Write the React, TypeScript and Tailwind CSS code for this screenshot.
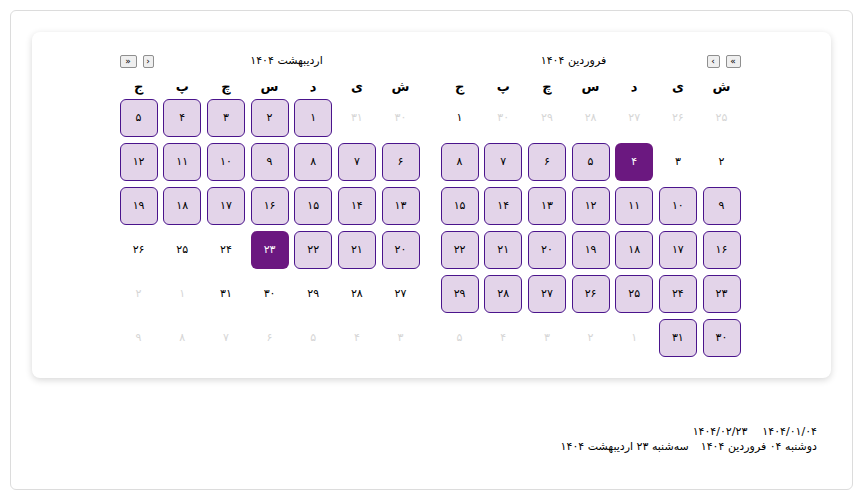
import React from "react";

const fa = (n: number) =>
  String(n).replace(/[0-9]/g, (d) => "۰۱۲۳۴۵۶۷۸۹"[Number(d)]);

type Cell = { d: number; kind: "out" | "plain" | "range" | "sel" };

function buildMonth(
  prevDays: number,
  startIdx: number,
  days: number,
  kindOf: (d: number) => Cell["kind"]
): Cell[] {
  const cells: Cell[] = [];
  for (let i = startIdx - 1; i >= 0; i--) cells.push({ d: prevDays - i, kind: "out" });
  for (let d = 1; d <= days; d++) cells.push({ d, kind: kindOf(d) });
  let n = 1;
  while (cells.length < 42) cells.push({ d: n++, kind: "out" });
  return cells;
}

const farvardin = buildMonth(30, 6, 31, (d) => (d < 4 ? "plain" : d === 4 ? "sel" : "range"));
const ordibehesht = buildMonth(31, 2, 31, (d) => (d < 23 ? "range" : d === 23 ? "sel" : "plain"));

const weekdays = ["ش", "ی", "د", "س", "چ", "پ", "ج"];

function NavBtn({ children, w }: { children: React.ReactNode; w: string }) {
  return (
    <button
      className={`${w} h-[13px] flex items-center justify-center rounded-[2px] border border-[#8f8f8f] bg-[#efefef] text-[9px] leading-none text-black`}
    >
      {children}
    </button>
  );
}

function DayCell({ c }: { c: Cell }) {
  const base =
    "w-[38px] h-[38px] flex items-center justify-center text-[11px] rounded-[6px]";
  if (c.kind === "out")
    return <div className={`${base} text-[#d6d6d6]`}>{fa(c.d)}</div>;
  if (c.kind === "plain") return <div className={`${base} text-black`}>{fa(c.d)}</div>;
  if (c.kind === "sel")
    return <div className={`${base} bg-[#6b1880] text-white`}>{fa(c.d)}</div>;
  return (
    <div className={`${base} bg-[#e3d4e9] border border-[#4a148c] text-black`}>{fa(c.d)}</div>
  );
}

function Month({
  title,
  cells,
  navFirst,
}: {
  title: string;
  cells: Cell[];
  navFirst: boolean;
}) {
  return (
    <div className="w-[300px] flex flex-col">
      <div className="h-[14px] flex items-center">
        {navFirst && (
          <div className="flex items-center gap-[6px]">
            <NavBtn w="w-[15px]">»</NavBtn>
            <NavBtn w="w-[13px]">›</NavBtn>
          </div>
        )}
        <div className="flex-1 text-center text-[11px] text-black">{title}</div>
        {!navFirst && (
          <div className="flex items-center gap-[6px]">
            <NavBtn w="w-[11px]">‹</NavBtn>
            <NavBtn w="w-[17px]">«</NavBtn>
          </div>
        )}
      </div>
      <div className="mt-[8px] mb-[1px] h-[22px] grid grid-cols-[repeat(7,38px)] gap-x-[5.67px]">
        {weekdays.map((w) => (
          <div key={w} className="flex items-center justify-center text-[13px] font-bold text-black">
            {w}
          </div>
        ))}
      </div>
      <div className="grid grid-cols-[repeat(7,38px)] gap-x-[5.67px] gap-y-[6px]">
        {cells.map((c, i) => (
          <DayCell key={i} c={c} />
        ))}
      </div>
    </div>
  );
}

export default function App() {
  return (
    <div
      className="w-[863px] h-[501px] bg-white pt-[10px] px-[10px]"
      style={{ fontFamily: '"DejaVu Sans", sans-serif' }}
    >
      <div className="h-[480px] rounded-[6px] border border-[#dcdcdc] p-[21px]">
        <div
          dir="rtl"
          className="rounded-[8px] bg-white shadow-[0_2px_7px_rgba(0,0,0,0.16)] pt-[22px] pb-[21px] pr-[3px] flex justify-center gap-[21px]"
        >
          <Month title="فروردین ۱۴۰۴" cells={farvardin} navFirst />
          <Month title="اردیبهشت ۱۴۰۴" cells={ordibehesht} navFirst={false} />
        </div>
        <div dir="rtl" className="mt-[46px] pr-[14px] text-[11px] leading-[15px] text-black">
          <div className="flex gap-[15px]">
            <span>۱۴۰۴/۰۱/۰۴</span>
            <span>۱۴۰۴/۰۲/۲۳</span>
          </div>
          <div className="flex gap-[12px]">
            <span>دوشنبه ۰۴ فروردین ۱۴۰۴</span>
            <span>سه‌شنبه ۲۳ اردیبهشت ۱۴۰۴</span>
          </div>
        </div>
      </div>
    </div>
  );
}
